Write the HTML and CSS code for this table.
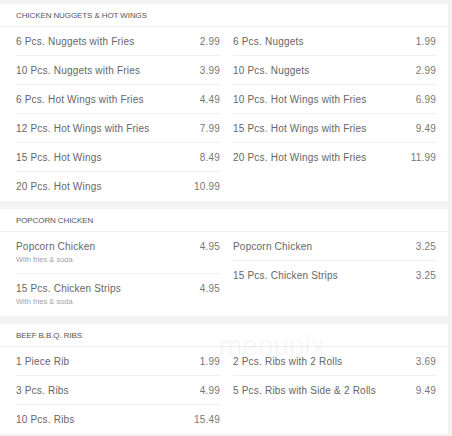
FILE: index.html
```html
<!DOCTYPE html>
<html lang="en">
<head>
  <meta charset="UTF-8">
  <meta name="viewport" content="width=device-width, initial-scale=1.0">
  <title>Menu</title>
  <link rel="stylesheet" href="styles.css">
</head>
<body>
  <div class="menu">

    <section class="card">
      <h2 class="card-title">Chicken Nuggets &amp; Hot Wings</h2>
      <div class="columns">
        <ul class="col">
          <li class="item"><span class="name">6 Pcs. Nuggets with Fries</span><span class="price">2.99</span></li>
          <li class="item"><span class="name">10 Pcs. Nuggets with Fries</span><span class="price">3.99</span></li>
          <li class="item"><span class="name">6 Pcs. Hot Wings with Fries</span><span class="price">4.49</span></li>
          <li class="item"><span class="name">12 Pcs. Hot Wings with Fries</span><span class="price">7.99</span></li>
          <li class="item"><span class="name">15 Pcs. Hot Wings</span><span class="price">8.49</span></li>
          <li class="item"><span class="name">20 Pcs. Hot Wings</span><span class="price">10.99</span></li>
        </ul>
        <ul class="col">
          <li class="item"><span class="name">6 Pcs. Nuggets</span><span class="price">1.99</span></li>
          <li class="item"><span class="name">10 Pcs. Nuggets</span><span class="price">2.99</span></li>
          <li class="item"><span class="name">10 Pcs. Hot Wings with Fries</span><span class="price">6.99</span></li>
          <li class="item"><span class="name">15 Pcs. Hot Wings with Fries</span><span class="price">9.49</span></li>
          <li class="item"><span class="name">20 Pcs. Hot Wings with Fries</span><span class="price">11.99</span></li>
        </ul>
      </div>
    </section>

    <section class="card">
      <h2 class="card-title">Popcorn Chicken</h2>
      <div class="columns">
        <ul class="col">
          <li class="item item-tall">
            <div class="item-text"><span class="name">Popcorn Chicken</span><span class="note">With fries &amp; soda</span></div>
            <span class="price">4.95</span>
          </li>
          <li class="item item-tall">
            <div class="item-text"><span class="name">15 Pcs. Chicken Strips</span><span class="note">With fries &amp; soda</span></div>
            <span class="price">4.95</span>
          </li>
        </ul>
        <ul class="col">
          <li class="item"><span class="name">Popcorn Chicken</span><span class="price">3.25</span></li>
          <li class="item"><span class="name">15 Pcs. Chicken Strips</span><span class="price">3.25</span></li>
        </ul>
      </div>
    </section>

    <section class="card">
      <h2 class="card-title">Beef B.B.Q. Ribs</h2>
      <div class="columns">
        <ul class="col">
          <li class="item"><span class="name">1 Piece Rib</span><span class="price">1.99</span></li>
          <li class="item"><span class="name">3 Pcs. Ribs</span><span class="price">4.99</span></li>
          <li class="item"><span class="name">10 Pcs. Ribs</span><span class="price">15.49</span></li>
        </ul>
        <ul class="col">
          <li class="item"><span class="name">2 Pcs. Ribs with 2 Rolls</span><span class="price">3.69</span></li>
          <li class="item"><span class="name">5 Pcs. Ribs with Side &amp; 2 Rolls</span><span class="price">9.49</span></li>
        </ul>
      </div>
      <div class="watermark">menupix</div>
    </section>

  </div>
</body>
</html>
```

FILE: styles.css
```css
* {
  margin: 0;
  padding: 0;
  box-sizing: border-box;
}

body {
  background-color: #f3f3f4;
  color: #666;
  font-family: 'Liberation Sans', Arial, sans-serif;
  padding: 4px 4px 0 0;
}

.menu {
  display: flex;
  flex-direction: column;
  gap: 8px;
}

.card {
  background-color: #fff;
  position: relative;
}

.card-title {
  height: 23px;
  display: flex;
  align-items: center;
  padding-left: 16px;
  font-size: 8px;
  font-weight: normal;
  letter-spacing: -0.1px;
  text-transform: uppercase;
  color: #555;
  border-bottom: 1px solid #f0f0f0;
}

.columns {
  display: grid;
  grid-template-columns: 226px 1fr;
}

.col {
  list-style: none;
  padding: 0 6px 0 16px;
}

.col + .col {
  padding: 0 12px 0 7px;
}

.item {
  height: 29px;
  display: flex;
  justify-content: space-between;
  align-items: center;
  border-bottom: 1px solid #efefef;
  font-size: 10px;
  letter-spacing: 0.2px;
}

.item:last-child {
  border-bottom: none;
}

.item-tall {
  height: 42px;
  align-items: flex-start;
  padding-top: 9px;
}

.item-text {
  display: flex;
  flex-direction: column;
  gap: 3px;
}

.name {
  color: #666;
}

.note {
  font-size: 7.5px;
  letter-spacing: 0;
  color: #a3a3a3;
}

.price {
  color: #777;
}

.watermark {
  position: absolute;
  left: 219px;
  top: 8px;
  font-size: 28px;
  line-height: 1;
  color: rgba(0, 0, 0, 0.05);
  pointer-events: none;
}
```
